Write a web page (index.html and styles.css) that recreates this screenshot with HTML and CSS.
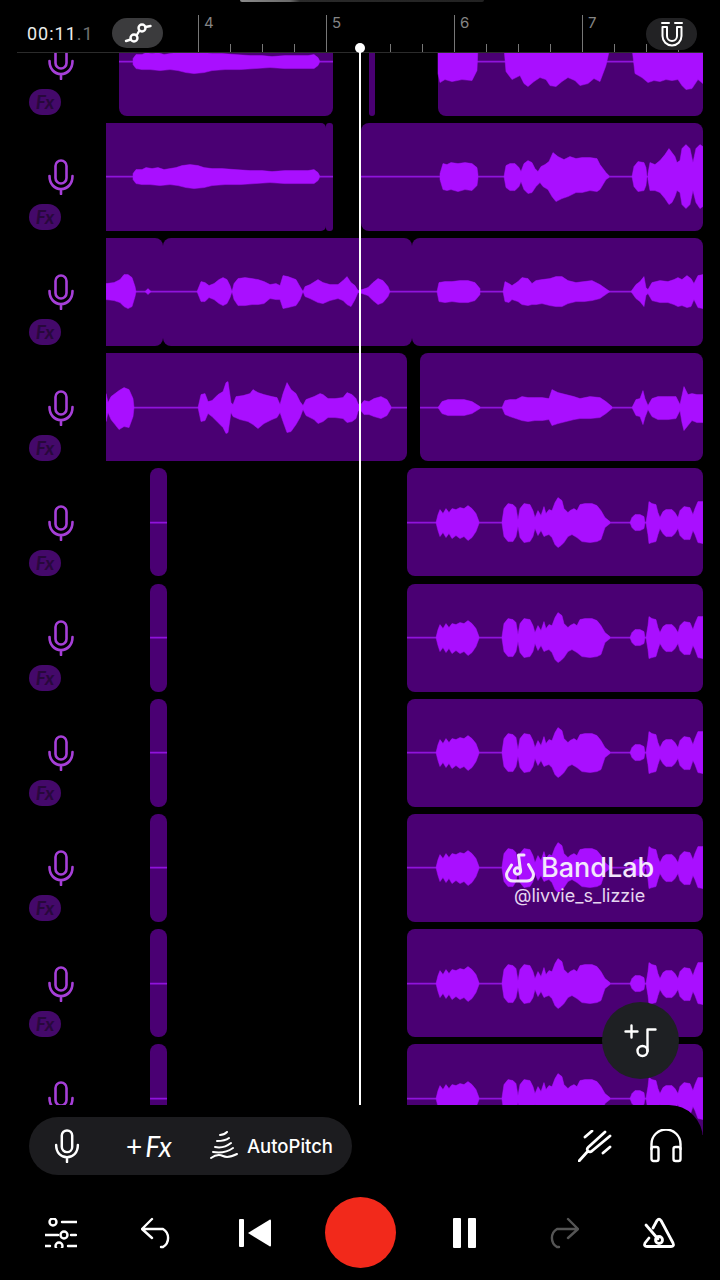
FILE: index.html
```html
<!DOCTYPE html>
<html lang="en">
	<head>
		<meta charset="utf-8">
		<title>BandLab Studio</title>
		<link rel="stylesheet" href="styles.css">
	</head>
	<body>

		<!-- waveforms, x is page x and y is distance from the track's centre line -->
		<svg class="defs" aria-hidden="true">
			<symbol id="micIcon" viewBox="0 0 26 36">
				<rect x="7.5" y="1.5" width="11" height="23" rx="5.5"/>
				<path d="M1.5 17c0 8 5 13 11.5 13s11.5-5 11.5-13M13 30v5"/>
			</symbol>
			<g id="longBlob">
				<path class="blob" d="M133-3 136-7 142-7 146-9 152-8 158-9 164-7 170-8 176-9 182-11 190-12 198-11 204-9 212-8 222-8 235-7 250-6 262-6 272-5 285-6 296-6 308-6 314-7 318-4 320 0 318 4 314 7 300 7 285 7 270 6 255 7 240 8 225 8 212 9 204 11 194 12 186 11 178 9 170 8 160 9 150 8 142 8 136 7 133 3Z"/>
			</g>
			<g id="waveLow">
				<path class="line" d="M150 0H167M407 0H703"/>
				<path class="blob" d="M436 0 438-8 440-13 443-9 446-14 449-10 452-14 456-13 460-15 464-14 468-17 472-14 476-9 479-1V1L476 9 472 15 468 18 464 14 460 16 456 13 452 16 449 11 446 15 443 10 440 14 438 8Z"/>
				<path class="blob" d="M502-1 504-14 508-19 513-18 516-15 518-3 520-14 524-19 530-18 533-12 535-5 538-12 541-7 544-16 546-9 549-13 552-12 555-20 558-25 562-22 564-14 568-10 570-12 574-14 577-12 580-18 585-19 592-19 597-17 601-12 605-5 610-1V1L605 5 601 17 597 19 590 20 582 19 577 15 572 12 568 14 564 20 561 23 558 25 555 22 552 15 549 12 546 13 544 14 541 8 538 13 535 6 533 14 530 19 524 20 520 15 518 4 516 14 513 19 508 19 504 14 502 1Z"/>
				<path class="blob" d="M630 0 632-5 635-8 640-8 644-6 645 0 644 6 640 8 635 8 632 5Z"/>
				<path class="blob" d="M646 0 648-12 649-21 652-19 656-18 658-10 660-5 663-11 666-13 672-13 675-10 678-5 680-12 684-16 690-15 693-8 695-14 698-21 703-21V21L698 20 695 12 693 8 690 17 684 17 680 13 678 6 675 11 672 14 666 14 663 11 660 6 658 12 656 19 652 20 649 21 648 12Z"/>
			</g>
		</svg>

		<main class="app">
			<div class="notch"></div>

			<!-- time readout and bar ruler -->
			<header class="ruler">
				<div class="time">00:11<span class="time-dim">.1</span></div>
				<div class="pill pill-auto">
					<svg class="icon-line" width="28" height="24" viewBox="0 0 28 24"><circle cx="10" cy="17" r="3.5"/><circle cx="18" cy="7" r="3.5"/><path d="M2 20l4.800-1.500M12.500 14.500l3-5M21.500 6l5-1"/></svg>
				</div>
				<div class="bars">
					<div class="bar"><span>4</span></div>
					<div class="bar"><span>5</span></div>
					<div class="bar"><span>6</span></div>
					<div class="bar"><span>7</span></div>
				</div>
				<div class="pill pill-magnet">
					<svg class="icon-line thin" width="24" height="26" viewBox="0 0 24 26"><path d="M2 2h7M15 2h7M2.500 6v9a9.500 9.500 0 0 0 19 0V6h-4.500v9a5 5 0 0 1-10 0V6Z"/></svg>
				</div>
			</header>

			<section class="timeline">
				<div class="tracks">

					<div class="track">
						<div class="head"><svg class="mic"><use href="#micIcon"/></svg><div class="fx">Fx</div></div>
						<div class="lane">
							<div class="clip r0-a"></div>
							<div class="clip r0-b"></div>
							<div class="clip r0-c"></div>
							<svg class="wave" viewBox="106 -57.600 597 115.200">
								<path class="line" d="M119 0H133M320 0H333M439 0H703"/>
								<use href="#longBlob"/>
								<path class="blob" d="M438-14H478L477 9 472 19 462 18 452 20 445 18 440 21 438 12Z"/>
								<path class="blob" d="M504-14H610L606 4 600 20 594 17 588 22 580 24 575 19 568 16 562 20 556 25 550 24 546 18 540 16 534 20 528 25 524 22 520 14 512 18 506 10Z"/>
								<path class="blob" d="M632-14H703V22L698 18 692 27 686 28 682 24 678 18 672 19 666 18 660 20 654 19 648 21 642 16 635 12Z"/>
							</svg>
						</div>
					</div>

					<div class="track">
						<div class="head"><svg class="mic"><use href="#micIcon"/></svg><div class="fx">Fx</div></div>
						<div class="lane">
							<div class="clip flush r1-a"></div>
							<div class="clip r1-b"></div>
							<div class="clip r1-c"></div>
							<svg class="wave" viewBox="106 -57.600 597 115.200">
								<path class="line" d="M106 0H133M320 0H333M361 0H703"/>
								<use href="#longBlob"/>
								<path class="blob" d="M440-3 443-13 447-12 451-14 458-13 465-14 472-13 477-9 478-2V2L477 9 472 14 465 13 458 15 451 13 447 14 443 13 440 3Z"/>
								<path class="blob" d="M504 0 506-11 510-13 515-13 519-9 521-5 524-13 528-16 532-14 535-8 538-5 541-10 545-12 549-15 553-24 558-20 564-17 570-20 576-18 582-19 590-19 597-18 600-12 606-4 609-1V1L606 3 600 13 597 15 590 14 582 16 576 16 568 20 562 22 556 25 552 20 548 13 543 10 540 6 536 10 532 16 528 17 524 13 521 5 519 10 515 14 510 14 506 11Z"/>
								<path class="blob" d="M632 0 634-10 638-15 644-14 646-9 647 0 646 9 644 14 638 15 634 10Z"/>
								<path class="blob" d="M648-3 650-14 655-12 660-16 665-22 669-28 672-24 675-20 677-14 680-16 682-28 686-32 690-28 693-14 696-28 700-32 703-30V30L700 32 696 26 693 14 690 28 686 32 682 28 680 16 677 14 675 20 672 26 669 28 665 22 660 16 655 14 650 14 648 3Z"/>
							</svg>
						</div>
					</div>

					<div class="track">
						<div class="head"><svg class="mic"><use href="#micIcon"/></svg><div class="fx">Fx</div></div>
						<div class="lane">
							<div class="clip flush r2-a"></div>
							<div class="clip r2-b"></div>
							<div class="clip r2-c"></div>
							<svg class="wave" viewBox="106 -57.600 597 115.200">
								<path class="line" d="M106 0H703"/>
								<path class="blob" d="M106-8 114-9 120-12 124-17 128-17 132-14 135-5 136 0 135 5 132 15 128 17 124 15 120 11 114 9 106 8Z"/>
								<path class="blob" d="M145 0 148-3 151 0 148 3Z"/>
								<path class="blob" d="M197 0 201-10 205-9 209-6 214-8 219-12 223-14 227-12 230-6 232 0 234-8 238-13 245-14 252-13 258-12 264-10 270-7 276-8 280-6 283-16 288-15 296-12 300-5 303 0 305-5 310-7 318-12 323-9 330-7 338-7 343-11 347-15 351-9 355-6 358-1 362-2 368-4 373-9 378-13 383-11 388-5 390 0 388 5 383 11 378 13 373 9 368 4 362 2 358 1 355 8 351 15 347 13 343 9 338 7 330 9 323 12 318 11 310 7 305 5 303 0 300 8 296 14 288 16 283 17 280 8 276 8 270 7 264 12 258 13 252 13 245 14 238 14 234 8 232 0 230 6 227 12 223 14 219 12 214 8 209 6 205 10 201 10Z"/>
								<path class="blob" d="M437 0 439-9 445-10 452-10 460-11 468-11 475-9 480-3V3L475 9 468 11 460 11 452 10 445 11 439 10Z"/>
								<path class="blob" d="M503 0 505-10 509-8 512-6 518-10 522-14 528-13 532-8 536-11 542-12 550-13 556-15 562-15 568-11 576-9 584-10 592-11 600-7 610 0 600 7 592 9 584 10 576 10 568 12 562 15 556 15 550 14 542 12 536 13 532 13 528 14 522 13 518 10 512 8 509 11 505 10Z"/>
								<path class="blob" d="M631 0 636-7 640-10 644-15 646-4 648-2 652-9 660-11 668-10 674-12 678-14 682-12 687-16 691-13 694-8 698-16 703-17V17L698 16 694 8 691 15 687 16 682 14 678 15 674 13 668 11 660 11 652 9 648 2 646 4 644 15 640 10 636 7Z"/>
							</svg>
						</div>
					</div>

					<div class="track">
						<div class="head"><svg class="mic"><use href="#micIcon"/></svg><div class="fx">Fx</div></div>
						<div class="lane">
							<div class="clip flush r3-a"></div>
							<div class="clip r3-b"></div>
							<svg class="wave" viewBox="106 -57.600 597 115.200">
								<path class="line" d="M106 0H407M420 0H703"/>
								<path class="blob" d="M106-14 108-5 111-11 115-14 119-17 124-20 129-18 133-9 134 0 133 9 129 20 124 19 119 22 115 17 111 12 108 5 106 14Z"/>
								<path class="blob" d="M198 0 201-13 205-14 208-6 212-7 218-13 223-16 226-25 228-26 231-5 233-3 236-11 243-12 250-14 253-18 258-15 264-13 272-11 277-10 280-3 283-14 287-25 291-18 296-14 300-6 303-2 306-8 314-11 320-14 323-13 328-9 335-9 343-10 347-15 352-13 356-9 358-4 360-2 364-7 369-6 374-9 381-11 387-8 391-1V1L387 8 381 11 374 9 369 7 364 7 360 2 358 4 356 11 352 14 347 15 343 11 335 10 328 10 323 14 318 16 314 12 306 8 303 2 300 10 296 17 291 24 287 25 283 14 280 5 277 10 272 12 264 16 258 21 253 17 248 14 240 12 233 9 231 5 228 25 226 26 223 20 218 15 212 9 208 6 205 13 201 14Z"/>
								<path class="blob" d="M438 0 442-6 448-8 456-8 464-8 472-6 480-1V1L472 6 464 8 456 8 448 8 442 6Z"/>
								<path class="blob" d="M502 0 505-7 510-8 516-8 522-11 528-10 535-10 542-10 549-9 552-18 558-15 566-13 574-11 580-9 590-11 600-10 606-6 612-1V1L606 6 600 10 590 11 580 11 574 12 566 14 558 16 552 18 549 12 542 13 535 13 528 14 522 13 516 11 510 9 505 7Z"/>
								<path class="blob" d="M632 0 636-8 640-9 643-17 645-9 648-2 652-9 658-11 668-11 676-11 680-3 682-12 684-21 688-13 692-14 697-13 703-13V15L697 15 692 13 688 18 684 23 682 15 680 3 676 11 668 12 658 12 652 9 648 2 645 10 643 17 640 9 636 8Z"/>
							</svg>
						</div>
					</div>

					<div class="track">
						<div class="head"><svg class="mic"><use href="#micIcon"/></svg><div class="fx">Fx</div></div>
						<div class="lane">
							<div class="clip short"></div>
							<div class="clip main"></div>
							<svg class="wave" viewBox="106 -57.600 597 115.200"><use href="#waveLow"/></svg>
						</div>
					</div>

					<div class="track">
						<div class="head"><svg class="mic"><use href="#micIcon"/></svg><div class="fx">Fx</div></div>
						<div class="lane">
							<div class="clip short"></div>
							<div class="clip main"></div>
							<svg class="wave" viewBox="106 -57.600 597 115.200"><use href="#waveLow"/></svg>
						</div>
					</div>

					<div class="track">
						<div class="head"><svg class="mic"><use href="#micIcon"/></svg><div class="fx">Fx</div></div>
						<div class="lane">
							<div class="clip short"></div>
							<div class="clip main"></div>
							<svg class="wave" viewBox="106 -57.600 597 115.200"><use href="#waveLow"/></svg>
						</div>
					</div>

					<div class="track">
						<div class="head"><svg class="mic"><use href="#micIcon"/></svg><div class="fx">Fx</div></div>
						<div class="lane">
							<div class="clip short"></div>
							<div class="clip main"></div>
							<svg class="wave" viewBox="106 -57.600 597 115.200"><use href="#waveLow"/></svg>
						</div>
					</div>

					<div class="track">
						<div class="head"><svg class="mic"><use href="#micIcon"/></svg><div class="fx">Fx</div></div>
						<div class="lane">
							<div class="clip short"></div>
							<div class="clip main"></div>
							<svg class="wave" viewBox="106 -57.600 597 115.200"><use href="#waveLow"/></svg>
						</div>
					</div>

					<!-- last track runs under the panel, its Fx badge is not visible -->
					<div class="track">
						<div class="head"><svg class="mic"><use href="#micIcon"/></svg></div>
						<div class="lane">
							<div class="clip short"></div>
							<div class="clip main"></div>
							<svg class="wave" viewBox="106 -57.600 597 115.200"><use href="#waveLow"/></svg>
						</div>
					</div>

				</div>
			</section>

			<div class="playhead"></div>

			<!-- watermark over the tracks -->
			<div class="mark">
				<div class="mark-logo">
					<svg class="icon-line bold" width="30" height="30" viewBox="0 0 30 30"><path d="M6.500 12 2.500 18.500C0 23 3 28 8 28H22C27 28 30 23 27.500 18.500L23.500 11.500M19 2H13.500L15.500 18"/><circle cx="12.500" cy="18" r="3.200"/></svg>
					<span>BandLab</span>
				</div>
				<div class="mark-user">@livvie_s_lizzie</div>
			</div>

			<button class="add-track">
				<svg class="icon-line" width="36" height="36" viewBox="0 0 36 36"><path d="M2.500 8.500h12M8.500 2.500v12M24.500 28V6.500h8"/><circle cx="19.500" cy="28" r="5"/></svg>
			</button>

			<!-- tools and transport -->
			<footer class="panel">
				<div class="tools">
					<div class="tool-pill">
						<svg class="mic mic-white"><use href="#micIcon"/></svg>
						<span class="add-fx"><span class="add-plus">+</span>Fx</span>
						<svg class="icon-line thin pitch-icon" width="28" height="30" viewBox="0 0 28 30"><path d="M10 4c3 0 5-1 7-3M7 10c4 0 8 0 12-3M5 16c5 1 11 0 16-4M1 27c4-3 8-4 12-2s8 1 14-2M3 21c6 1 13 1 20-4"/></svg>
						<span class="pitch-label">AutoPitch</span>
					</div>
					<div class="tool-right">
						<svg class="icon-line heavy" width="34" height="32" viewBox="0 0 34 32"><path d="M1 31l9-10M10 21c-1.500-1.500-1-2.500.5-4L27 2M10 21c1.500 1.500 3 1 4.500-.5L32 6M7 7l7-6M25 23l7-6"/></svg>
						<svg class="icon-line" width="32" height="34" viewBox="0 0 32 34"><path d="M1.500 20v-5a14.500 14.500 0 0 1 29 0v5"/><rect x="1.500" y="18" width="7" height="14" rx="2"/><rect x="23.500" y="18" width="7" height="14" rx="2"/></svg>
					</div>
				</div>
				<div class="transport">
					<svg class="icon-line" width="32" height="30" viewBox="0 0 32 30"><path d="M17 4h15M0 17h13M26 17h5M0 28h5M23 28h9"/><circle cx="8" cy="4" r="3.500"/><circle cx="19" cy="17" r="3.500"/><circle cx="14" cy="28" r="3.500"/></svg>
					<svg class="icon-line" width="34" height="32" viewBox="0 0 34 32"><path d="M11 2 1 12l10 9M1 12h21a10.500 10.500 0 0 1 0 18h-2"/></svg>
					<svg class="icon-fill" width="32" height="28" viewBox="0 0 32 28"><rect width="5" height="28" rx="1"/><path d="M9 14 31 0.500A1 1 0 0 1 32 1.500V26.500A1 1 0 0 1 31 27.500Z"/></svg>
					<div class="record"></div>
					<svg class="icon-fill" width="24" height="30" viewBox="0 0 24 30"><rect x="1" width="8" height="30" rx="1"/><rect x="16" width="8" height="30" rx="1"/></svg>
					<svg class="icon-line muted" width="34" height="32" viewBox="0 0 34 32"><path d="M23 2l10 10-10 9M33 12H12a10.500 10.500 0 0 0 0 18h2"/></svg>
					<svg class="icon-line heavy" width="34" height="32" viewBox="0 0 34 32"><path d="M11 11 15 3.500q2-2.500 4 0L31 26q1.500 3.500-2 3.500H5q-3.500 0-2-3.500L7 21M4 8 16 22"/><circle cx="17" cy="23" r="3.500"/></svg>
				</div>
			</footer>
		</main>

	</body>
</html>
```

FILE: styles.css
```css
/*
	page
*/

* {
	box-sizing: border-box;
}

body {
	margin: 0;
	background-color: #000;
	font-family: "Inter", "Liberation Sans", sans-serif;
}

.defs {
	position: absolute;
	width: 0;
	height: 0;
}

.app {
	position: relative;
	width: 720px;
	height: 1280px;
	overflow: hidden;
	background-color: #000;
}

.notch {
	position: absolute;
	top: 0;
	left: 240px;
	width: 244px;
	height: 2px;
	border-radius: 0 0 6px 6px;
	background: linear-gradient(90deg, #8a8a8a 0, #6a6a6a 50px, #2a2a2a 60px, #222 100%);
}

/*
	time readout and ruler
*/

.ruler {
	position: relative;
	display: flex;
	height: 53px;
	width: 703px;
	padding: 15px 0 0 27px;
	overflow: hidden;
}

.ruler::after {
	content: "";
	position: absolute;
	left: 17px;
	right: 0;
	bottom: 0;
	height: 1px;
	background-color: #2b2b2b;
}

.time {
	flex: none;
	width: 85px;
	margin-top: 9px;
	color: #ececec;
	font-family: "Roboto", sans-serif;
	font-size: 18px;
	letter-spacing: 1px;
	line-height: 20px;
}

.time-dim {
	color: #6f6f6f;
}

.pill {
	display: flex;
	flex: none;
	align-items: center;
	justify-content: center;
	width: 51px;
	border-radius: 16px;
}

.pill-auto {
	height: 30px;
	margin-top: 3px;
	background-color: #3b3b3d;
}

.pill-magnet {
	position: absolute;
	top: 18px;
	left: 646px;
	height: 32px;
	background-color: #222224;
}

.bars {
	display: flex;
	flex: none;
	height: 37px;
	margin-left: 35px;
}

.bar {
	flex: none;
	width: 128px;
	padding: 0 0 0 5px;
	border-left: 1px solid #777;
	color: #858585;
	font-size: 15px;
	line-height: 16px;
	background-image: repeating-linear-gradient(90deg, transparent 0, transparent 31px, #777 31px, #777 32px);
	background-repeat: no-repeat;
	background-position: 0 100%;
	background-size: 96px 8px;
}

/*
	tracks
*/

.timeline {
	width: 703px;
	height: 1082px;
	margin-bottom: -30px;
	overflow: hidden;
}

.tracks {
	margin-top: -49px;
}

.track {
	display: flex;
	height: 115.2px;
}

.head {
	display: flex;
	flex-direction: column;
	width: 106px;
	padding: 40px 0 0 29px;
}

.mic {
	width: 26px;
	height: 36px;
	margin-left: 19px;
	fill: none;
	stroke: #a63fd8;
	stroke-width: 2.6;
	stroke-linecap: round;
}

.fx {
	width: 32px;
	height: 26px;
	margin-top: 9px;
	border-radius: 13px;
	background-color: #44096a;
	color: #28083c;
	font-family: "Lato", sans-serif;
	font-size: 19px;
	font-style: italic;
	font-weight: 700;
	line-height: 26px;
	text-align: center;
}

.lane {
	position: relative;
	display: flex;
	flex: 1;
	padding: 3.600px 0;
}

.clip {
	border-radius: 8px;
	background-color: #4a0073;
}

.flush {
	border-radius: 0 8px 8px 0;
}

.wave {
	position: absolute;
	top: 0;
	left: 0;
	width: 597px;
	height: 115.200px;
}

.blob {
	fill: #a90fff;
	stroke: #a90fff;
	stroke-width: 0.5;
	stroke-linejoin: round;
}

.line {
	fill: none;
	stroke: #9013dc;
	stroke-width: 1.6;
}

/* clip widths for the first four tracks, gaps as left margins */

.r0-a { width: 214px; margin-left: 13px; }
.r0-b { width: 6px; margin-left: 36px; }
.r0-c { flex: 1; margin-left: 63px; }
.r1-a { width: 220px; border-radius: 0 5px 5px 0; }
.r1-b { width: 7px; border-radius: 3px; }
.r1-c { flex: 1; margin-left: 28px; }
.r2-a { width: 57px; }
.r2-b { width: 249px; }
.r2-c { flex: 1; }
.r3-a { width: 301px; }
.r3-b { flex: 1; margin-left: 13px; }

/* the other six tracks share the same two clips */

.short { width: 17px; margin-left: 44px; }
.main { flex: 1; margin-left: 240px; }

.playhead {
	position: absolute;
	top: 48px;
	left: 359px;
	width: 2px;
	height: 1057px;
	background-color: #fff;
}

.playhead::before {
	content: "";
	position: absolute;
	top: -5px;
	left: -4px;
	width: 10px;
	height: 10px;
	border-radius: 50%;
	background-color: #fff;
}

/*
	watermark and add button
*/

.mark {
	position: absolute;
	top: 852px;
	left: 505px;
	color: #f3e7fb;
}

.mark-logo {
	display: flex;
	align-items: center;
	gap: 6px;
	font-size: 27px;
	font-weight: 500;
	line-height: 32px;
}

.mark-user {
	margin: 2px 0 0 9px;
	font-size: 18px;
	line-height: 20px;
	color: #e6d6f0;
}

.add-track {
	position: absolute;
	top: 1002px;
	left: 602px;
	display: flex;
	align-items: center;
	justify-content: center;
	width: 77px;
	height: 77px;
	padding: 0;
	border: 0;
	border-radius: 50%;
	background-color: #1e2023;
}

/*
	icons
*/

.icon-line {
	fill: none;
	stroke: #fff;
	stroke-width: 2.4;
	stroke-linecap: round;
	stroke-linejoin: round;
}

.thin {
	stroke-width: 2;
}

.heavy {
	stroke-width: 2.8;
}

.bold {
	stroke: #f3e7fb;
	stroke-width: 3;
}

.muted {
	stroke: #555;
}

.icon-fill {
	fill: #fff;
}

/*
	bottom panel
*/

.panel {
	position: relative;
	width: 703px;
	height: 175px;
	padding-top: 12px;
	border-top-right-radius: 34px;
	background-color: #000;
}

.tools {
	display: flex;
	align-items: center;
	padding: 0 21px 0 29px;
}

.tool-pill {
	display: flex;
	align-items: center;
	width: 323px;
	height: 58px;
	padding-left: 25px;
	border-radius: 29px;
	background-color: #1c1c1f;
	color: #fff;
}

.mic-white {
	flex: none;
	width: 26px;
	height: 34px;
	margin-left: 0;
	stroke: #fff;
}

.add-fx {
	flex: none;
	width: 48px;
	margin-left: 46px;
	font-family: "Lato", sans-serif;
	font-size: 28px;
	font-style: italic;
	line-height: 30px;
	white-space: nowrap;
}

.add-plus {
	margin-right: 3px;
	font-style: normal;
}

.pitch-icon {
	flex: none;
	margin-left: 36px;
}

.pitch-label {
	margin-left: 9px;
	font-size: 18.500px;
	font-weight: 500;
}

.tool-right {
	display: flex;
	align-items: center;
	gap: 38px;
	margin-left: auto;
}

.transport {
	display: grid;
	grid-template-columns: 96px 98px 96px 114px 94px 102px 92px;
	align-items: center;
	justify-items: center;
	margin: 22px 0 0 13px;
}

.record {
	width: 71px;
	height: 71px;
	border-radius: 50%;
	background-color: #f2291b;
}
```
